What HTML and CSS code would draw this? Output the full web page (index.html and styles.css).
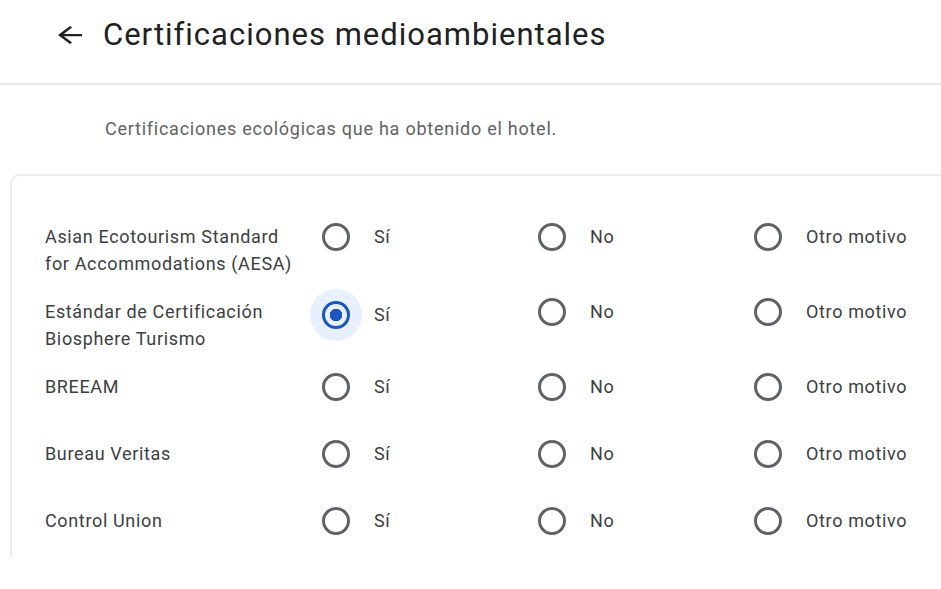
FILE: index.html
```html
<!DOCTYPE html>
<html lang="es">
<head>
    <meta charset="UTF-8">
    <meta name="viewport" content="width=device-width, initial-scale=1.0">
    <title>Certificaciones medioambientales</title>
    <link rel="stylesheet" href="styles.css">
</head>
<body>

<header class="topbar">
    <!-- Back arrow -->
    <svg class="back" width="24" height="18" viewBox="4 4 16 16" preserveAspectRatio="none">
        <path d="M20 11H7.83l5.59-5.59L12 4l-8 8 8 8 1.41-1.41L7.83 13H20v-2z" fill="#202124"/>
    </svg>
    <h1>Certificaciones medioambientales</h1>
</header>

<p class="intro">Certificaciones ecológicas que ha obtenido el hotel.</p>

<div class="card">
    <!-- AESA -->
    <div class="row">
        <div class="label">Asian Ecotourism Standard<br>for Accommodations (AESA)</div>
        <label class="option"><span class="radio"></span>Sí</label>
        <label class="option"><span class="radio"></span>No</label>
        <label class="option"><span class="radio"></span>Otro motivo</label>
    </div>

    <!-- Biosphere -->
    <div class="row">
        <div class="label">Estándar de Certificación<br>Biosphere Turismo</div>
        <label class="option checked"><span class="halo"><span class="radio"></span></span>Sí</label>
        <label class="option"><span class="radio"></span>No</label>
        <label class="option"><span class="radio"></span>Otro motivo</label>
    </div>

    <!-- BREEAM -->
    <div class="row">
        <div class="label">BREEAM</div>
        <label class="option"><span class="radio"></span>Sí</label>
        <label class="option"><span class="radio"></span>No</label>
        <label class="option"><span class="radio"></span>Otro motivo</label>
    </div>

    <!-- Bureau Veritas -->
    <div class="row">
        <div class="label">Bureau Veritas</div>
        <label class="option"><span class="radio"></span>Sí</label>
        <label class="option"><span class="radio"></span>No</label>
        <label class="option"><span class="radio"></span>Otro motivo</label>
    </div>

    <!-- Control Union -->
    <div class="row">
        <div class="label">Control Union</div>
        <label class="option"><span class="radio"></span>Sí</label>
        <label class="option"><span class="radio"></span>No</label>
        <label class="option"><span class="radio"></span>Otro motivo</label>
    </div>
</div>

</body>
</html>
```

FILE: styles.css
```css
body {
    font-family: Roboto, "Liberation Sans", sans-serif;
    background-color: #fff;
    color: #3c4043;
    margin: 0;
    padding: 0;
    overflow: hidden;
}
.topbar {
    display: flex;
    align-items: flex-start;
    height: 85px;
    padding: 15px 0 0 58px;
    border-bottom: 2px solid #e6e6ea;
    box-sizing: border-box;
}
.back {
    display: block;
    margin: 11px 21px 0 0;
}
h1 {
    margin: 0;
    font-size: 31px;
    line-height: 40px;
    font-weight: 400;
    color: #202124;
    letter-spacing: 1px;
}
.intro {
    margin: 32px 0 0 105px;
    font-size: 18px;
    line-height: 24px;
    color: #5f6368;
    letter-spacing: 0.75px;
}
.card {
    margin: 33px 0 0 10px;
    height: 383px;
    padding: 47px 0 0 33px;
    border: 2px solid #ececec;
    border-right: none;
    border-bottom: none;
    border-top-left-radius: 10px;
    box-sizing: border-box;
}
.row {
    display: grid;
    grid-template-columns: 277px repeat(3, 216px);
    min-height: 46px;
    margin-bottom: 21px;
    align-items: start;
}
.label {
    font-size: 18px;
    line-height: 27px;
    color: #3c4043;
    letter-spacing: 0.65px;
}
.option {
    display: flex;
    align-items: center;
    height: 27px;
    font-size: 18px;
    color: #3c4043;
    letter-spacing: 0.65px;
}
.radio {
    width: 28px;
    height: 28px;
    border: 3px solid #5f6368;
    border-radius: 50%;
    box-sizing: border-box;
    margin-right: 24px;
    flex-shrink: 0;
}
.checked {
    margin-top: 3px;
}
.halo {
    display: flex;
    align-items: center;
    justify-content: center;
    width: 52px;
    height: 52px;
    margin: 0 12px 0 -12px;
    border-radius: 50%;
    background-color: #e8f0fe;
    flex-shrink: 0;
}
.halo .radio {
    margin-right: 0;
    border-color: #1a56c4;
    background: radial-gradient(circle, #1a56c4 0 6px, transparent 6.5px);
}
```
